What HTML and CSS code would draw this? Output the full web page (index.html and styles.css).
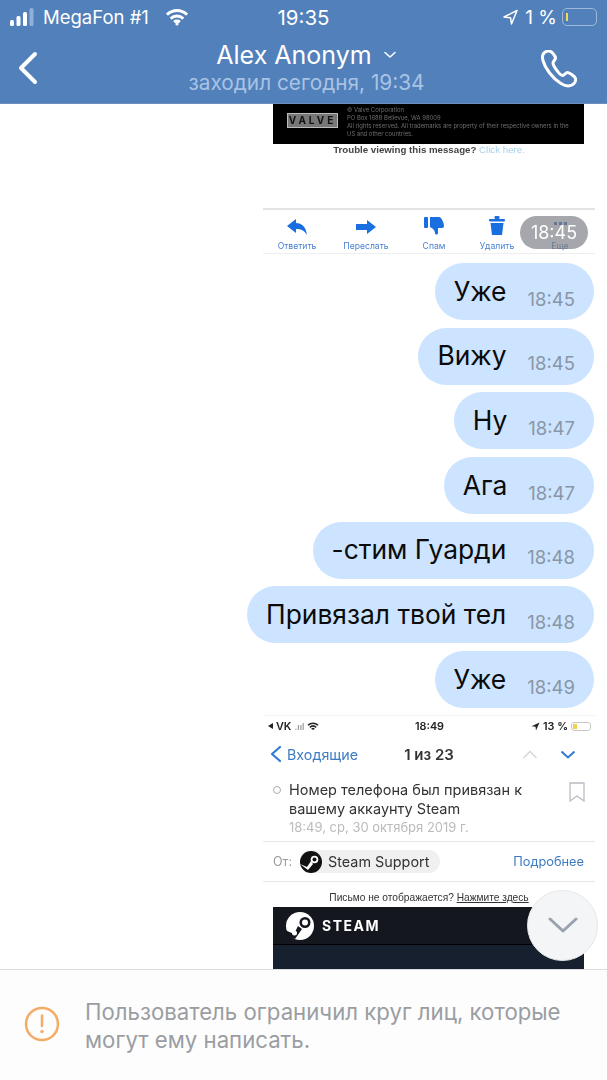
FILE: index.html
```html
<!doctype html>
<html>
<head>
    <meta charset="utf-8">
    <meta name="viewport" content="width=device-width, initial-scale=1">
    <title>Alex Anonym</title>
    <link rel="stylesheet" href="styles.css">
</head>
<body>

<div class="screen">
    <header class="topbar">
        <div class="statusBar">
            <div class="statusLeft">
                <svg class="signal" width="24" height="18" viewBox="0 0 24 18">
                    <rect x="0" y="12" width="4" height="6" rx="1.5" fill="#fff"/>
                    <rect x="6.500" y="8" width="4" height="10" rx="1.500" fill="#fff"/>
                    <rect x="13" y="4" width="4" height="14" rx="1.500" fill="#fff"/>
                    <rect x="19.500" y="0" width="4" height="18" rx="1.500" fill="#8fb0d8"/>
                </svg>
                <span class="carrier">MegaFon #1</span>
                <svg class="wifi" width="24" height="18" viewBox="0 0 22 17" fill="none" stroke="#fff" stroke-width="2.800">
                    <path d="M1.500 6.200C7 1 15 1 20.500 6.200"/>
                    <path d="M5 10C8.500 6.800 13.500 6.800 17 10"/>
                    <path d="M8.300 13.300C9.800 12 12.200 12 13.700 13.300"/>
                    <circle cx="11" cy="15" r="1" fill="#fff" stroke-width="1"/>
                </svg>
            </div>
            <div class="statusTime">19:35</div>
            <div class="statusRight">
                <svg width="15" height="16" viewBox="0 0 15 16" fill="none" stroke="#fff" stroke-width="1.500" stroke-linejoin="round">
                    <path d="M14 1.500L1 8L7.500 8.700L8.500 15Z"/>
                </svg>
                <span class="batteryText">1 %</span>
                <div class="battery"><div class="batteryLevel"></div></div>
            </div>
        </div>
        <div class="navBar">
            <svg class="backIcon" width="22" height="34" viewBox="0 0 22 34" fill="none" stroke="#fff" stroke-width="4" stroke-linecap="round" stroke-linejoin="round">
                <path d="M18 3L4 17L18 31"/>
            </svg>
            <div class="peer">
                <div class="peerName">Alex Anonym
                    <svg width="14" height="8" viewBox="0 0 14 8" fill="none" stroke="#fff" stroke-width="1.600" stroke-linecap="round" stroke-linejoin="round">
                        <path d="M2 1.500L7 6L12 1.500"/>
                    </svg>
                </div>
                <div class="peerSeen">заходил сегодня, 19:34</div>
            </div>
            <svg class="callIcon" width="36" height="38" viewBox="0 0 36 38" fill="none" stroke="#fff" stroke-width="3" stroke-linejoin="round">
                <path d="M3.500 2.500C1.500 4 1 7 2 10.500C4 18 11 28 20 33.500C24 36 28 36.500 31 35C34 33.500 35 30.500 34.500 28.500C34 26.500 28.500 22.500 26.500 22.500C24.500 22.500 23.500 25.500 21.500 25.500C19 25.500 12 16 12 13C12 11 14.500 10 14.500 8C14.500 6 10.500 1 8 1C6.500 1 5 1.500 3.500 2.500Z"/>
            </svg>
        </div>
    </header>

    <main class="chat">
        <div class="shot valveShot">
            <div class="valveBox">
                <div class="valveLogo">VALVE</div>
                <div class="valveText">© Valve Corporation<br>PO Box 1688 Bellevue, WA 98009<br>All rights reserved. All trademarks are property of their respective owners in the US and other countries.</div>
            </div>
            <div class="trouble">Trouble viewing this message? <span class="troubleLink">Click here.</span></div>
        </div>

        <div class="shot actions">
            <div class="action">
                <svg width="20" height="16" viewBox="0 0 20 16" fill="#1a6fe0"><path d="M0 7L9 0V4C15 4 19 8 20 16C17 11 14 10 9 10V14Z"/></svg>
                <span>Ответить</span>
            </div>
            <div class="action">
                <svg width="20" height="16" viewBox="0 0 20 16" fill="#1a6fe0"><path d="M20 8L11 1V5H0V11H11V15Z"/></svg>
                <span>Переслать</span>
            </div>
            <div class="action">
                <svg width="20" height="18" viewBox="0 0 20 18" fill="#1a6fe0"><rect x="0" y="0" width="4" height="11" rx="1"/><path d="M6 0H15C17 0 20 5 20 9C20 11 18 11 17 11H14L14 16C14 18 11 18 11 16C11 13 8 11 6 10Z"/></svg>
                <span>Спам</span>
            </div>
            <div class="action">
                <svg width="16" height="19" viewBox="0 0 16 19" fill="#1a6fe0"><rect x="0" y="3" width="16" height="2.500" rx="1"/><rect x="5.500" y="0" width="5" height="3" rx="1"/><path d="M1.500 7H14.500L13 19H3Z"/></svg>
                <span>Удалить</span>
            </div>
            <div class="action">
                <div class="moreDots"></div>
                <span class="moreLabel">Еще</span>
            </div>
            <div class="datePill">18:45</div>
        </div>

        <div class="messages">
            <div class="bubble"><span class="msgText">Уже</span><span class="msgTime">18:45</span></div>
            <div class="bubble"><span class="msgText">Вижу</span><span class="msgTime">18:45</span></div>
            <div class="bubble"><span class="msgText">Ну</span><span class="msgTime">18:47</span></div>
            <div class="bubble"><span class="msgText">Ага</span><span class="msgTime">18:47</span></div>
            <div class="bubble"><span class="msgText">-стим Гуарди</span><span class="msgTime">18:48</span></div>
            <div class="bubble"><span class="msgText">Привязал твой тел</span><span class="msgTime">18:48</span></div>
            <div class="bubble"><span class="msgText">Уже</span><span class="msgTime">18:49</span></div>
        </div>

        <div class="shot mailShot">
            <div class="mailStatus">
                <div class="mailStatusSide"><span class="tinyBack"></span>VK <span class="tinyDots">.ııl</span>
                    <svg width="12" height="9" viewBox="0 0 22 17" fill="none" stroke="#222" stroke-width="3"><path d="M1.500 6.200C7 1 15 1 20.500 6.200"/><path d="M5 10C8.500 6.800 13.500 6.800 17 10"/><path d="M8.500 13.500C10 12.300 12 12.300 13.500 13.500"/></svg>
                </div>
                <div class="mailClock">18:49</div>
                <div class="mailStatusSide mailStatusRight">
                    <svg width="9" height="9" viewBox="0 0 18 18" fill="#222"><path d="M17 1L1 8.500L9 9.500L10 17Z"/></svg>
                    13 %
                    <div class="tinyBattery"><div class="tinyLevel"></div></div>
                </div>
            </div>
            <div class="mailNav">
                <div class="inbox">
                    <svg width="12" height="18" viewBox="0 0 12 18" fill="none" stroke="#2f7bd2" stroke-width="2.200" stroke-linecap="round" stroke-linejoin="round"><path d="M10 2L2 9L10 16"/></svg>
                    Входящие
                </div>
                <div class="mailCount">1 из 23</div>
                <div class="mailArrows">
                    <svg width="16" height="9" viewBox="0 0 16 9" fill="none" stroke="#d6d8dc" stroke-width="1.600"><path d="M1.500 8L8 1.500L14.500 8"/></svg>
                    <svg width="16" height="9" viewBox="0 0 16 9" fill="none" stroke="#2f7bd2" stroke-width="2"><path d="M1.500 1.500L8 7.500L14.500 1.500"/></svg>
                </div>
            </div>
            <div class="subject">
                <div class="unreadDot"></div>
                <div class="subjectBody">
                    <div class="subjectText">Номер телефона был привязан к вашему аккаунту Steam</div>
                    <div class="subjectDate">18:49, ср, 30 октября 2019 г.</div>
                </div>
                <svg class="bookmark" width="16" height="20" viewBox="0 0 16 20" fill="none" stroke="#b9bcc2" stroke-width="1.300"><path d="M1 1H15V19L8 14L1 19Z"/></svg>
            </div>
            <div class="fromRow">
                <span class="fromLabel">От:</span>
                <div class="sender">
                    <svg class="senderLogo" width="22" height="22" viewBox="0 0 22 22"><circle cx="11" cy="11" r="11" fill="#111"/><circle cx="14.500" cy="8.500" r="3.800" fill="#fff"/><circle cx="14.500" cy="8.500" r="2" fill="#111"/><path d="M0 13L7 16L11 10L13 13L8 19Z" fill="#fff"/></svg>
                    Steam Support
                </div>
                <span class="fromMore">Подробнее</span>
            </div>
            <div class="notShown">Письмо не отображается? <span class="notShownLink">Нажмите здесь</span></div>
            <div class="steamHead">
                <svg width="30" height="30" viewBox="0 0 30 30"><circle cx="15" cy="15" r="14" fill="#fff"/><circle cx="20" cy="11.500" r="5.500" fill="#15171f"/><circle cx="20" cy="11.500" r="3" fill="#fff"/><path d="M0 19L9 23L13 15L17 18L10 28L3 26Z" fill="#15171f"/><circle cx="9.500" cy="22" r="2.500" fill="#fff"/></svg>
                <span class="steamWord">STEAM</span>
            </div>
            <div class="steamBody"></div>
        </div>

        <div class="scrollDown">
            <svg width="30" height="17" viewBox="0 0 30 17" fill="none" stroke="#99a2ae" stroke-width="3" stroke-linecap="round" stroke-linejoin="round"><path d="M2 2L15 14L28 2"/></svg>
        </div>
    </main>

    <footer class="notice">
        <svg class="noticeIcon" width="36" height="36" viewBox="0 0 36 36" fill="none">
            <circle cx="18" cy="18" r="16" stroke="#f4ab66" stroke-width="2.500"/>
            <path d="M18 9.500V20" stroke="#f4ab66" stroke-width="2.500" stroke-linecap="round"/>
            <circle cx="18" cy="25.500" r="1.700" fill="#f4ab66"/>
        </svg>
        <div class="noticeText">Пользователь ограничил круг лиц, которые могут ему написать.</div>
    </footer>
</div>

</body>
</html>
```
FILE: styles.css
```css
* {
    box-sizing: border-box;
}

body {
    margin: 0;
    background-color: #fff;
    font-family: Inter, "Noto Sans", sans-serif;
}

.screen {
    width: 607px;
    height: 1080px;
    display: flex;
    flex-direction: column;
    overflow: hidden;
}

/* top bar */
.topbar {
    height: 104px;
    flex: none;
    background-color: #5180bb;
    color: #fff;
    border-bottom: 1px solid #6c8fbd;
}

.statusBar {
    height: 34px;
    padding: 0 10px 0 10px;
    display: grid;
    grid-template-columns: 1fr auto 1fr;
    align-items: center;
    font-size: 18.500px;
}

.statusLeft {
    display: flex;
    align-items: center;
    gap: 9px;
}

.wifi {
    margin-left: 7px;
}

.statusTime {
    font-size: 20.500px;
}

.statusRight {
    display: flex;
    align-items: center;
    justify-content: flex-end;
    gap: 7px;
}

.batteryText {
    font-size: 19px;
}

.battery {
    width: 35px;
    height: 18px;
    margin-left: -2px;
    padding: 4px 3px;
    border: 1px solid #9db8da;
    border-radius: 5px;
}

.batteryLevel {
    width: 2px;
    height: 100%;
    background-color: #f4dc4e;
}

.navBar {
    height: 69px;
    padding: 0 30px 0 17px;
    display: flex;
    align-items: center;
    justify-content: space-between;
}

.backIcon {
    margin-top: -2px;
}

.peer {
    text-align: center;
    margin-top: -2px;
    margin-left: 33px;
}

.peerName {
    font-size: 25px;
    line-height: 30px;
    display: flex;
    align-items: center;
    justify-content: center;
    gap: 11px;
}

.peerSeen {
    font-size: 20.800px;
    line-height: 26px;
    color: #a9c3e3;
}

/* chat */
.chat {
    flex: 1;
    position: relative;
    overflow: hidden;
    background-color: #fff;
}

.shot {
    margin-left: 263px;
    width: 332px;
    filter: blur(0.35px);
}

.valveBox {
    margin: 0 11px 0 10px;
    height: 40px;
    padding: 2px 12px 0 14px;
    display: flex;
    gap: 9px;
    background-color: #000;
}

.valveLogo {
    width: 51px;
    height: 15px;
    margin-top: 7px;
    flex: none;
    background-color: #777;
    border: 1px solid #bbb;
    color: #111;
    font-size: 10px;
    font-weight: 700;
    letter-spacing: 3px;
    line-height: 13px;
    text-align: center;
}

.valveText {
    font-size: 5.900px;
    line-height: 8px;
    color: #6e6e6e;
}

.trouble {
    height: 12px;
    line-height: 12px;
    padding-left: 0;
    text-align: center;
    font-family: "Liberation Sans", sans-serif;
    font-size: 9.700px;
    font-weight: 700;
    color: #444;
}

.troubleLink {
    font-weight: 400;
    color: #a5d0e8;
}

.actions {
    margin-top: 52px;
    height: 46px;
    padding: 6px 2px 0 0;
    display: grid;
    grid-template-columns: 68px 70px 66px 60px 66px;
    position: relative;
    border-top: 2px solid #e4e4e4;
    border-bottom: 1px solid #eeeeee;
}

.action {
    display: flex;
    flex-direction: column;
    align-items: center;
    justify-content: flex-end;
    height: 35px;
    gap: 6px;
    font-size: 8.600px;
    color: #4a80d0;
    white-space: nowrap;
}

.moreDots {
    width: 14px;
    height: 3px;
    margin-bottom: 10px;
    background: radial-gradient(circle, #1a4fa0 1.500px, transparent 1.700px) 0 0 / 5px 3px repeat-x;
}

.moreLabel {
    color: #3a5f96;
}

.datePill {
    position: absolute;
    left: 257px;
    top: 6px;
    width: 68px;
    height: 33px;
    border-radius: 17px;
    background-color: rgba(130, 133, 140, 0.72);
    color: #fff;
    font-size: 18px;
    line-height: 33px;
    text-align: center;
}

.messages {
    margin-top: 9px;
    padding-right: 13px;
    display: flex;
    flex-direction: column;
    align-items: flex-end;
    gap: 7.700px;
}

.bubble {
    height: 57px;
    padding: 0 19px;
    display: flex;
    align-items: center;
    gap: 21px;
    border-radius: 28.500px;
    background-color: #cce4ff;
}

.msgText {
    font-size: 26.400px;
    color: #0b0b0b;
    margin-top: -2px;
}

.msgTime {
    font-size: 18.500px;
    color: #8a96a6;
    margin-top: 14px;
}

/* mail screenshot */
.mailShot {
    margin-top: 7px;
    color: #333;
    height: 260px;
    padding-top: 1px;
    border-top: 1px solid #f2f2f2;
}

.mailStatus {
    height: 18px;
    padding: 0 4px 0 5px;
    display: grid;
    grid-template-columns: 1fr auto 1fr;
    align-items: center;
    font-size: 10.800px;
    font-weight: 600;
    color: #222;
}

.mailStatusSide {
    display: flex;
    align-items: center;
    gap: 3px;
}

.mailStatusRight {
    justify-content: flex-end;
}

.tinyBack {
    width: 0;
    height: 0;
    border-top: 3px solid transparent;
    border-bottom: 3px solid transparent;
    border-right: 5px solid #222;
}

.tinyDots {
    color: #999;
    font-size: 9px;
}

.tinyBattery {
    width: 20px;
    height: 9px;
    padding: 1px;
    border: 1px solid #c8c8c8;
    border-radius: 3px;
}

.tinyLevel {
    width: 4px;
    height: 100%;
    background-color: #f2d14e;
}

.mailNav {
    height: 38px;
    padding: 0 19px 0 7px;
    display: grid;
    grid-template-columns: 1fr auto 1fr;
    align-items: center;
}

.inbox {
    display: flex;
    align-items: center;
    gap: 5px;
    font-size: 14.300px;
    color: #3d7cc4;
}

.mailCount {
    margin-left: 12px;
    font-size: 15px;
    font-weight: 600;
}

.mailArrows {
    display: flex;
    justify-content: flex-end;
    gap: 22px;
}

.subject {
    height: 68px;
    padding: 7px 9px 0 10px;
    display: flex;
    align-items: flex-start;
}

.unreadDot {
    width: 8px;
    height: 8px;
    margin-top: 6px;
    margin-right: 8px;
    flex: none;
    border: 1px solid #aaa;
    border-radius: 50%;
}

.subjectBody {
    flex: 1;
}

.subjectText {
    width: 250px;
    font-size: 14.500px;
    line-height: 19px;
}

.subjectDate {
    font-size: 13px;
    line-height: 19px;
    color: #bbb;
}

.bookmark {
    margin-top: 2px;
    margin-right: 1px;
}

.fromRow {
    height: 41px;
    padding: 0 11px 0 10px;
    display: flex;
    align-items: center;
    border-top: 1px solid #e8e8e8;
    border-bottom: 1px solid #e8e8e8;
    font-size: 14.400px;
}

.fromLabel {
    color: #999;
    font-size: 12.500px;
    margin-right: 8px;
}

.sender {
    height: 23px;
    padding-right: 11px;
    display: flex;
    align-items: center;
    gap: 6px;
    border-radius: 12px;
    background-color: #f0f0f1;
}

.fromMore {
    margin-left: auto;
    font-size: 12.800px;
    color: #3d7cc4;
}

.notShown {
    height: 25px;
    padding: 10px 0 0 0;
    text-align: center;
    font-family: "Liberation Sans", sans-serif;
    font-size: 10.200px;
    color: #333;
    white-space: nowrap;
}

.notShownLink {
    text-decoration: underline;
}

.steamHead {
    height: 38px;
    margin: 0 11px 0 10px;
    padding-left: 12px;
    display: flex;
    align-items: center;
    gap: 7px;
    background-color: #15171f;
    border-bottom: 1px solid #000;
}

.steamWord {
    font-size: 14px;
    font-weight: 700;
    letter-spacing: 1.500px;
    color: #fff;
}

.steamBody {
    height: 40px;
    margin: 0 11px 0 10px;
    background-color: #17202f;
}

.scrollDown {
    position: absolute;
    left: 527px;
    top: 786px;
    width: 71px;
    height: 71px;
    display: flex;
    align-items: center;
    justify-content: center;
    border-radius: 50%;
    background-color: #f4f5f6;
    border: 1px solid #e6e7e9;
}

/* bottom notice */
.notice {
    height: 111px;
    flex: none;
    padding: 0 30px 0 24px;
    display: flex;
    align-items: center;
    gap: 25px;
    background-color: #fdfdfd;
    border-top: 1px solid #dcdcde;
}

.noticeIcon {
    flex: none;
    margin-bottom: 2px;
}

.noticeText {
    font-size: 22.200px;
    line-height: 28px;
    color: #9a9da2;
    margin-top: 1px;
}
```
